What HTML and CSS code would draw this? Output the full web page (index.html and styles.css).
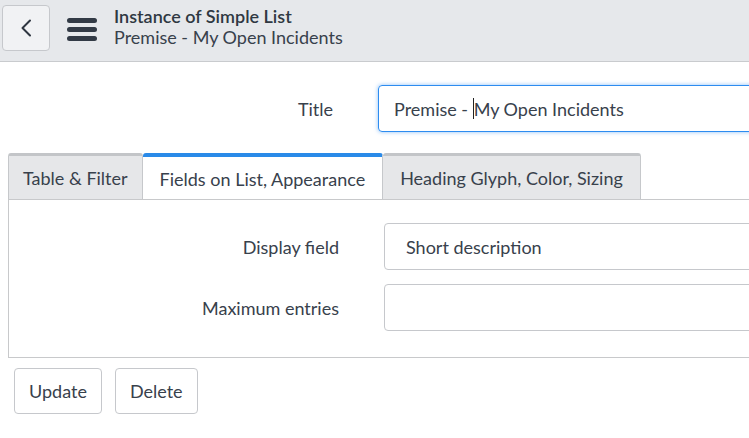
FILE: index.html
```html
<!DOCTYPE html>
<html lang="en">
<head>
<meta charset="UTF-8">
<title>Instance of Simple List</title>
<link rel="stylesheet" href="styles.css">
</head>
<body>

<!-- barra superior -->
<div class="topbar">
  <button class="back" aria-label="Back">
    <svg width="12" height="18" viewBox="0 0 12 18"><polyline points="10,1.5 2.5,9 10,16.5" fill="none" stroke="#2e3640" stroke-width="2" stroke-linecap="round" stroke-linejoin="round"/></svg>
  </button>
  <div class="burger"><span></span><span></span><span></span></div>
  <div class="heading">
    <div class="h-main">Instance of Simple List</div>
    <div class="h-sub">Premise - My Open Incidents</div>
  </div>
</div>

<div class="page">
  <div class="row title-row">
    <label class="lbl">Title</label>
    <div class="field focus">Premise - <span class="caret"></span>My Open Incidents</div>
  </div>

  <!-- abas -->
  <div class="tabs">
    <div class="tab first">Table &amp; Filter</div>
    <div class="tab active">Fields on List, Appearance</div>
    <div class="tab">Heading Glyph, Color, Sizing</div>
  </div>
  <div class="panel">
    <div class="row">
      <label class="lbl">Display field</label>
      <div class="field select">Short description</div>
    </div>
    <div class="row">
      <label class="lbl">Maximum entries</label>
      <div class="field select"></div>
    </div>
  </div>

  <div class="actions">
    <button class="btn">Update</button>
    <button class="btn">Delete</button>
  </div>
</div>

</body>
</html>
```

FILE: styles.css
```css
body{margin:0;font-family:Lato, "Liberation Sans", sans-serif;font-size:18px;color:#38414c;background:#fff;overflow:hidden;}
.topbar{
  display:flex;align-items:flex-start;height:61px;
  background:#e6e8eb;border-bottom:1px solid #c9cbce;padding-left:2px;
}
.back{
  width:48px;height:46px;margin-top:5px;padding:0;
  display:flex;align-items:center;justify-content:center;
  background:#f1f2f4;border:1px solid #c6c8cc;border-radius:4px;
}
.burger{display:flex;flex-direction:column;gap:4px;width:30px;margin:18px 0 0 17px;}
.burger span{display:block;height:5px;border-radius:3px;background:#323a45;}
.heading{margin:6px 0 0 17px;line-height:21px;}
.h-main{font-weight:600;color:#2f3842;}
.h-sub{}

.page{width:1000px;}
.row{display:grid;grid-template-columns:333px 1fr;column-gap:45px;align-items:center;}
.lbl{text-align:right;}
.title-row{margin-top:23px;}
.field{
  height:45px;border:1px solid #c6c8cc;border-radius:4px;
  display:flex;align-items:center;padding:0 15px;white-space:pre;
}
.field.focus{border-color:#2d8cf0;box-shadow:0 0 4px rgba(45,140,240,.55);}
.caret{display:inline-block;width:1px;height:21px;background:#222;}

.tabs{display:flex;margin:21px 0 0 8px;}
.tab{
  height:41px;line-height:41px;padding:2px 17px 0;
  background:#e6e7e9;border:1px solid #c6c8cb;border-top:3px solid #c3c5c8;
  border-bottom:none;border-radius:3px 3px 0 0;
}
.tab.first{padding:2px 14px 0;}
.tab + .tab{border-left:none;}
.tab.active{background:#fff;border-top:4px solid #2a8ae8;height:40px;line-height:40px;}
.panel{
  margin-left:8px;border:1px solid #c8c9cb;padding:23px 0 26px;
  display:flex;flex-direction:column;gap:14px;
}
.panel .row{grid-template-columns:330px 1fr;}
.select{padding:0 21px;}

.actions{display:flex;gap:13px;margin:10px 0 0 14px;}
.btn{
  height:46px;padding:0 14px;font:inherit;color:inherit;
  background:#fff;border:1px solid #c6c8cc;border-radius:4px;
}
```
